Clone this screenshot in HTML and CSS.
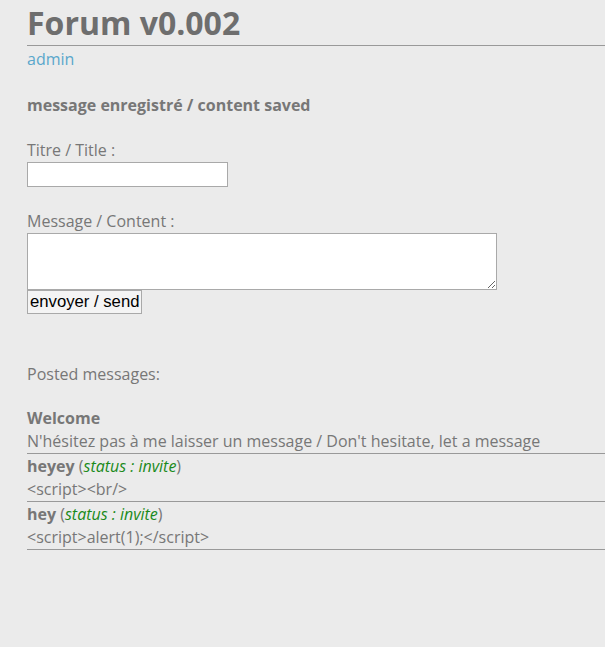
FILE: index.html
```html
<!DOCTYPE html>
<html lang="fr">
<head>
    <meta charset="utf-8">
    <title>Forum v0.002</title>
    <link rel="stylesheet" href="styles.css">
</head>
<body>
<h1 class="title">Forum v0.002</h1>
<a class="user" href="#">admin</a>

<p class="notice">message enregistré / content saved</p>

<form class="post-form">
    <label class="label" for="title">Titre / Title :</label>
    <input class="field" id="title" name="title" type="text">
    <label class="label label-content" for="content">Message / Content :</label>
    <textarea class="area" id="content" name="content"></textarea>
    <button class="send" type="button">envoyer / send</button>
</form>

<p class="posted">Posted messages:</p>

<div class="messages">
    <div class="msg">
        <div class="msg-head"><b>Welcome</b></div>
        <div class="msg-body">N'hésitez pas à me laisser un message / Don't hesitate, let a message</div>
    </div>
    <div class="msg">
        <div class="msg-head"><b>heyey</b> (<i class="status">status : invite</i>)</div>
        <div class="msg-body">&lt;script&gt;&lt;br/&gt;</div>
    </div>
    <div class="msg">
        <div class="msg-head"><b>hey</b> (<i class="status">status : invite</i>)</div>
        <div class="msg-body">&lt;script&gt;alert(1);&lt;/script&gt;</div>
    </div>
</div>
</body>
</html>
```

FILE: styles.css
```css
body {
    margin: 0;
    padding: 0 0 0 27px;
    background: #ebebeb;
    color: #777777;
    font-family: "Open Sans", "Noto Sans CJK KR", sans-serif;
    font-size: 16px;
    line-height: 24px;
}

.title {
    margin: 0;
    font-size: 32px;
    line-height: 46px;
    height: 45px;
    color: #6e6e6e;
    border-bottom: 1px solid #999999;
}

.user {
    display: block;
    margin-top: 1px;
    color: #5aa7cb;
    text-decoration: none;
}

.notice {
    margin: 22px 0 0 0;
    font-weight: bold;
}

.post-form {
    margin-top: 22px;
}

.label {
    display: block;
    line-height: 23px;
}

.label-content {
    margin-top: 23px;
}

.field {
    display: block;
    width: 201px;
    height: 25px;
    box-sizing: border-box;
    margin: 0;
    border: 1px solid #a9a9a9;
    background: #ffffff;
}

.area {
    display: block;
    width: 470px;
    height: 57px;
    box-sizing: border-box;
    margin: 0;
    border: 1px solid #a9a9a9;
    background: #ffffff;
}

.send {
    display: block;
    height: 24px;
    margin: 0;
    padding: 0 2px;
    border: 1px solid #a9a9a9;
    background: #f4f4f4;
    color: #000000;
    font-family: "Liberation Sans", Arial, sans-serif;
    font-size: 16.7px;
}

.posted {
    margin: 48px 0 0 0;
}

.messages {
    margin-top: 20px;
}

.msg {
    border-bottom: 1px solid #999999;
    line-height: 23.5px;
}

.msg-head {
    padding-top: 1px;
    margin-bottom: -1px;
}

.status {
    color: #1a8a1a;
}
```
